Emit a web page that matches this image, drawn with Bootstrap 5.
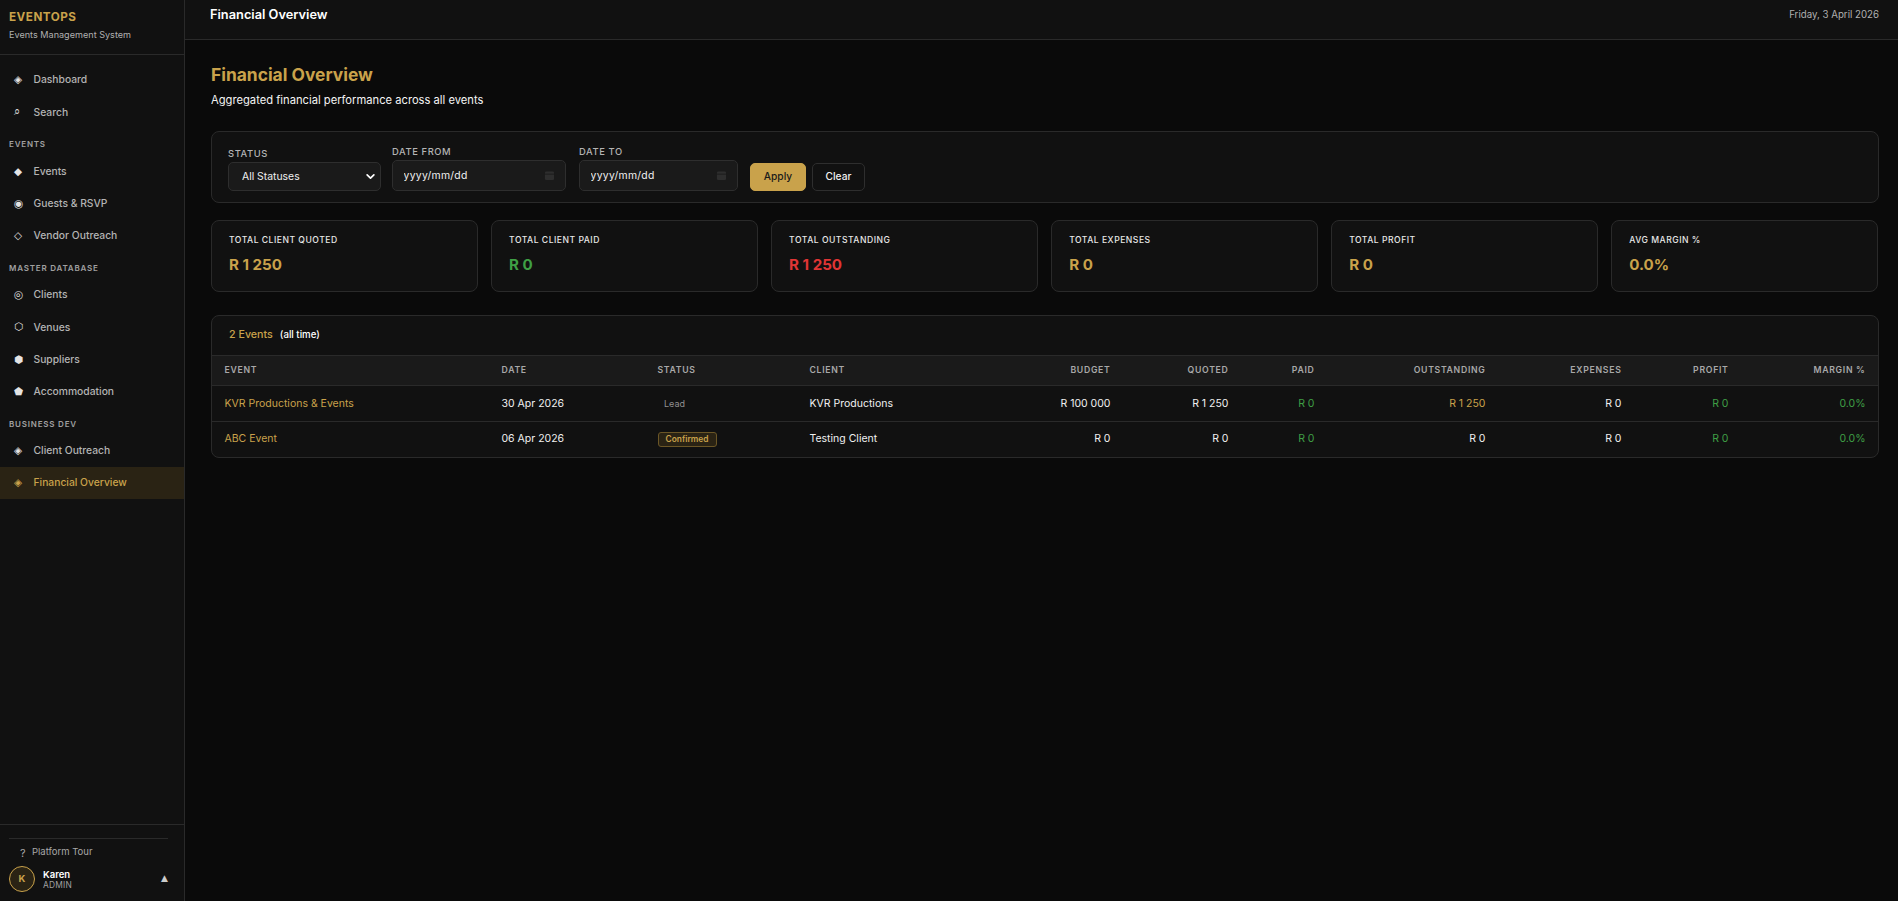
<!DOCTYPE html>
<html lang="en-ZA">
<head>
    <meta charset="UTF-8">
    <title>Financial Overview</title>
    <link href="https://cdn.jsdelivr.net/npm/bootstrap@5.3.0/dist/css/bootstrap.min.css" rel="stylesheet">
    <style>
        body {
            background: #0a0a0a;
            color: #f0f0f0;
            font-family: Inter, "DejaVu Sans", sans-serif;
            font-size: 13px;
            height: 901px;
            overflow: hidden;
        }
        .gold { color: #c9a24b; }
        .ok { color: #3f9f45; }
        .bad { color: #e03535; }
        .side {
            width: 185px;
            height: 901px;
            background: #111;
            border-right: 1px solid #2a2a2a;
        }
        .brand {
            height: 55px;
            padding: 9px 9px 0;
            border-bottom: 1px solid #2a2a2a;
        }
        .brand-name { font-size: 11.7px; font-weight: 700; letter-spacing: .5px; line-height: 16px; }
        .brand-sub { font-size: 9.1px; color: #b0b0b0; margin-top: 3px; line-height: 14px; }
        .side-nav { padding-top: 9px; }
        .nav-row {
            height: 32.2px;
            padding-left: 9px;
            color: #b4b4b4;
            font-size: 10.3px;
            font-weight: 500;
            text-decoration: none;
        }
        .nav-row.on { background: #2a2314; color: #c9a24b; }
        .nav-ico { width: 24.5px; padding-left: 5px; font-family: "DejaVu Sans", sans-serif; font-size: 10.5px; color: #e4e4e4; }
        .nav-row.on .nav-ico { color: #c9a24b; }
        .nav-head {
            padding: 10px 9px 0;
            height: 27px;
            font-size: 8px;
            font-weight: 600;
            letter-spacing: .8px;
            color: #a0a0a0;
            line-height: 13px;
        }
        .side-foot { border-top: 1px solid #2a2a2a; padding: 13px 9px 0; height: 77px; }
        .foot-line { border-top: 1px solid #2a2a2a; margin-right: 7px; padding: 6px 0 0 11px; color: #a8a8a8; font-size: 9.5px; height: 28px; }
        .foot-q { width: 12px; font-size: 11px; }
        .avatar {
            width: 26px;
            height: 26px;
            border: 1px solid #c9a24b;
            background: #2a2314;
            color: #c9a24b;
            font-size: 9.5px;
            font-weight: 700;
        }
        .user-name { font-size: 9.5px; font-weight: 600; line-height: 11px; color: #fff; }
        .user-role { font-size: 8.4px; line-height: 10px; color: #a0a0a0; letter-spacing: .2px; }
        .user-arrow { font-family: "DejaVu Sans", sans-serif; font-size: 9px; color: #ccc; margin-right: 7px; }
        .topbar {
            height: 40px;
            padding: 0 19px 9px 25px;
            background: #111;
            border-bottom: 1px solid #2a2a2a;
        }
        .top-title { font-size: 12.8px; font-weight: 600; color: #fff; }
        .top-date { font-size: 9.7px; color: #b0b0b0; }
        .page { padding: 23px 19.5px 0 26px; }
        .page-h { font-size: 17.4px; font-weight: 700; margin: 0; line-height: 24px; }
        .page-sub { font-size: 11.2px; margin: 5px 0 0; line-height: 16px; color: #f4f4f4; }
        .panel {
            background: #111;
            border: 1px solid #2a2a2a;
            border-radius: 8px;
        }
        .filter { margin-top: 23px; height: 72px; padding: 0 16px 11px; }
        .lbl { font-size: 9.4px; font-weight: 500; letter-spacing: .6px; color: #b4b4b4; line-height: 13px; margin-bottom: 2px; }
        .filter .form-select, .filter .form-control {
            background-color: #1a1a1a;
            border: 1px solid #2e2e2e;
            color: #f0f0f0;
            font-size: 10.4px;
            border-radius: 5px;
        }
        .filter .form-select {
            width: 153px;
            height: 29px;
            padding: 0 24px 0 13px;
            background-image: url("data:image/svg+xml,%3csvg xmlns='http://www.w3.org/2000/svg' viewBox='0 0 16 16'%3e%3cpath fill='none' stroke='%23ffffff' stroke-linecap='round' stroke-linejoin='round' stroke-width='3' d='m2 5 6 6 6-6'/%3e%3c/svg%3e");
            background-position: right 4px center;
            background-size: 11px 9px;
        }
        .filter .form-control { height: 31px; padding: 0 10.5px; letter-spacing: .3px; }
        .filter .form-control::placeholder { color: #f0f0f0; opacity: 1; }
        .date-wrap { position: relative; }
        .cal-ico { position: absolute; right: 11px; top: 10px; width: 11px; height: 11px; }
        .date-a { width: 174px; margin: 0 9px 0 3px; }
        .date-b { width: 159px; }
        .filter-acts { gap: 6px; }
        .btn-apply, .btn-clear { height: 28px; font-size: 10.2px; border-radius: 5px; font-weight: 500; }
        .btn-apply { width: 56px; padding: 0; background: #c9a24b; border: 1px solid #c9a24b; color: #1a1a1a; }
        .btn-clear { width: 53px; padding: 0; background: #111; border: 1px solid #2e2e2e; color: #f0f0f0; }
        .stats { display: grid; grid-template-columns: repeat(6, 1fr); gap: 12.8px; margin-top: 17px; }
        .stat { height: 72px; padding: 13px 17px 0; }
        .stat-lbl { font-size: 8.6px; font-weight: 500; letter-spacing: .5px; line-height: 13px; color: #e8e8e8; }
        .stat-val { font-size: 15.1px; font-weight: 700; line-height: 22px; margin-top: 7px; }
        .events { margin-top: 23px; overflow: hidden; }
        .events-head { height: 39px; padding-left: 17px; font-size: 10.7px; font-weight: 500; }
        .events-head small { font-size: 9.7px; color: #fff; margin-left: 7px; }
        .ev-table {
            --bs-table-bg: transparent;
            --bs-table-color: #f0f0f0;
            --bs-table-border-color: #2a2a2a;
            table-layout: fixed;
            font-size: 10.5px;
            margin: 0;
        }
        .ev-table th {
            background: #1a1a1a;
            height: 30px;
            padding: 0 13.5px;
            border-top: 1px solid #2a2a2a;
            font-size: 8.7px;
            font-weight: 600;
            letter-spacing: .7px;
            color: #a8a8a8;
            vertical-align: middle;
        }
        .ev-table td { height: 36px; padding: 0 13.5px; vertical-align: middle; color: #f0f0f0; }
        .ev-table th:first-child, .ev-table td:first-child { padding-left: 12.5px; }
        .ev-table th:last-child, .ev-table td:last-child { padding-right: 12px; }
        .ev-table td.gold { color: #c9a24b; }
        .ev-table td.ok { color: #3f9f45; }
        .ev-table tr:last-child td { border-bottom: 0; height: 35px; }
        .st-lead { color: #909090; font-size: 9px; padding-left: 6.5px; }
        .st-conf {
            display: inline-block;
            color: #c9a24b;
            background: #2a2314;
            border: 1px solid #6b5626;
            border-radius: 3px;
            font-size: 8.4px;
            font-weight: 600;
            line-height: 13px;
            padding: 0 7px;
        }
    </style>
</head>
<body>
    <div class="d-flex">
        <aside class="side d-flex flex-column flex-shrink-0">
            <div class="brand">
                <div class="brand-name gold">EVENTOPS</div>
                <div class="brand-sub">Events Management System</div>
            </div>
            <nav class="side-nav flex-grow-1">
                <a class="nav-row d-flex align-items-center" href="#"><span class="nav-ico">◈</span>Dashboard</a>
                <a class="nav-row d-flex align-items-center" href="#"><span class="nav-ico">⌕</span>Search</a>
                <div class="nav-head">EVENTS</div>
                <a class="nav-row d-flex align-items-center" href="#"><span class="nav-ico">◆</span>Events</a>
                <a class="nav-row d-flex align-items-center" href="#"><span class="nav-ico">◉</span>Guests &amp; RSVP</a>
                <a class="nav-row d-flex align-items-center" href="#"><span class="nav-ico">◇</span>Vendor Outreach</a>
                <div class="nav-head">MASTER DATABASE</div>
                <a class="nav-row d-flex align-items-center" href="#"><span class="nav-ico">◎</span>Clients</a>
                <a class="nav-row d-flex align-items-center" href="#"><span class="nav-ico">⬡</span>Venues</a>
                <a class="nav-row d-flex align-items-center" href="#"><span class="nav-ico">⬢</span>Suppliers</a>
                <a class="nav-row d-flex align-items-center" href="#"><span class="nav-ico">⬟</span>Accommodation</a>
                <div class="nav-head">BUSINESS DEV</div>
                <a class="nav-row d-flex align-items-center" href="#"><span class="nav-ico">◈</span>Client Outreach</a>
                <a class="nav-row on d-flex align-items-center" href="#"><span class="nav-ico">◈</span>Financial Overview</a>
            </nav>
            <div class="side-foot">
                <div class="foot-line d-flex"><span class="foot-q">?</span>Platform Tour</div>
                <div class="d-flex align-items-center gap-2">
                    <div class="avatar rounded-circle d-flex align-items-center justify-content-center flex-shrink-0">K</div>
                    <div class="flex-grow-1">
                        <div class="user-name">Karen</div>
                        <div class="user-role">ADMIN</div>
                    </div>
                    <span class="user-arrow">▲</span>
                </div>
            </div>
        </aside>
        <div class="flex-grow-1">
            <header class="topbar d-flex align-items-center justify-content-between">
                <div class="top-title">Financial Overview</div>
                <div class="top-date">Friday, 3 April 2026</div>
            </header>
            <main class="page">
                <h1 class="page-h gold">Financial Overview</h1>
                <p class="page-sub">Aggregated financial performance across all events</p>

                <div class="panel filter d-flex align-items-end">
                    <div class="me-2">
                        <div class="lbl">STATUS</div>
                        <select class="form-select"><option>All Statuses</option></select>
                    </div>
                    <div class="date-a">
                        <div class="lbl">DATE FROM</div>
                        <div class="date-wrap">
                            <input type="text" class="form-control" placeholder="yyyy/mm/dd">
                            <svg class="cal-ico" viewBox="0 0 12 12"><rect x="1" y="1.5" width="10" height="9.5" rx="1.5" fill="#2e2e2e"/><path d="M1 4.5h10" stroke="#1a1a1a"/></svg>
                        </div>
                    </div>
                    <div class="date-b ms-1">
                        <div class="lbl">DATE TO</div>
                        <div class="date-wrap">
                            <input type="text" class="form-control" placeholder="yyyy/mm/dd">
                            <svg class="cal-ico" viewBox="0 0 12 12"><rect x="1" y="1.5" width="10" height="9.5" rx="1.5" fill="#2e2e2e"/><path d="M1 4.5h10" stroke="#1a1a1a"/></svg>
                        </div>
                    </div>
                    <div class="filter-acts d-flex ms-2">
                        <button class="btn btn-apply ms-1">Apply</button>
                        <button class="btn btn-clear">Clear</button>
                    </div>
                </div>

                <div class="stats">
                    <div class="panel stat"><div class="stat-lbl">TOTAL CLIENT QUOTED</div><div class="stat-val gold">R 1 250</div></div>
                    <div class="panel stat"><div class="stat-lbl">TOTAL CLIENT PAID</div><div class="stat-val ok">R 0</div></div>
                    <div class="panel stat"><div class="stat-lbl">TOTAL OUTSTANDING</div><div class="stat-val bad">R 1 250</div></div>
                    <div class="panel stat"><div class="stat-lbl">TOTAL EXPENSES</div><div class="stat-val gold">R 0</div></div>
                    <div class="panel stat"><div class="stat-lbl">TOTAL PROFIT</div><div class="stat-val gold">R 0</div></div>
                    <div class="panel stat"><div class="stat-lbl">AVG MARGIN %</div><div class="stat-val gold">0.0%</div></div>
                </div>

                <div class="panel events">
                    <div class="events-head d-flex align-items-center"><span class="gold">2 Events</span><small>(all time)</small></div>
                    <table class="table ev-table">
                        <colgroup>
                            <col style="width:276px"><col style="width:156px"><col style="width:152px"><col style="width:191px">
                            <col style="width:137px"><col style="width:118px"><col style="width:86px"><col style="width:171px">
                            <col style="width:136px"><col style="width:107px"><col style="width:135.5px">
                        </colgroup>
                        <thead>
                            <tr>
                                <th>EVENT</th><th>DATE</th><th>STATUS</th><th>CLIENT</th>
                                <th class="text-end">BUDGET</th><th class="text-end">QUOTED</th><th class="text-end">PAID</th>
                                <th class="text-end">OUTSTANDING</th><th class="text-end">EXPENSES</th><th class="text-end">PROFIT</th><th class="text-end">MARGIN %</th>
                            </tr>
                        </thead>
                        <tbody>
                            <tr>
                                <td class="gold">KVR Productions &amp; Events</td><td>30 Apr 2026</td><td><span class="st-lead">Lead</span></td><td>KVR Productions</td>
                                <td class="text-end">R 100 000</td><td class="text-end">R 1 250</td><td class="text-end ok">R 0</td>
                                <td class="text-end gold">R 1 250</td><td class="text-end">R 0</td><td class="text-end ok">R 0</td><td class="text-end ok">0.0%</td>
                            </tr>
                            <tr>
                                <td class="gold">ABC Event</td><td>06 Apr 2026</td><td><span class="st-conf">Confirmed</span></td><td>Testing Client</td>
                                <td class="text-end">R 0</td><td class="text-end">R 0</td><td class="text-end ok">R 0</td>
                                <td class="text-end">R 0</td><td class="text-end">R 0</td><td class="text-end ok">R 0</td><td class="text-end ok">0.0%</td>
                            </tr>
                        </tbody>
                    </table>
                </div>
            </main>
        </div>
    </div>
    <script src="https://cdn.jsdelivr.net/npm/bootstrap@5.3.0/dist/js/bootstrap.bundle.min.js"></script>
</body>
</html>
